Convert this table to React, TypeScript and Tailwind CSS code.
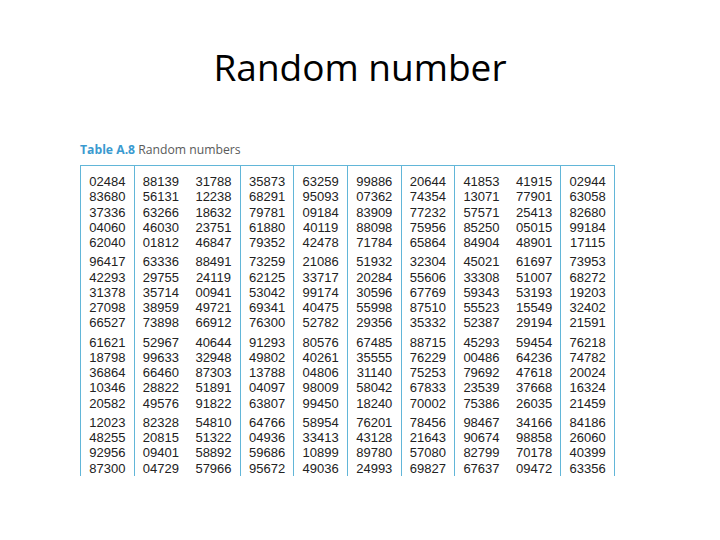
const COLUMNS: string[][] = [
  ["02484", "83680", "37336", "04060", "62040", "96417", "42293", "31378", "27098", "66527", "61621", "18798", "36864", "10346", "20582", "12023", "48255", "92956", "87300"],
  ["88139", "56131", "63266", "46030", "01812", "63336", "29755", "35714", "38959", "73898", "52967", "99633", "66460", "28822", "49576", "82328", "20815", "09401", "04729"],
  ["31788", "12238", "18632", "23751", "46847", "88491", "24119", "00941", "49721", "66912", "40644", "32948", "87303", "51891", "91822", "54810", "51322", "58892", "57966"],
  ["35873", "68291", "79781", "61880", "79352", "73259", "62125", "53042", "69341", "76300", "91293", "49802", "13788", "04097", "63807", "64766", "04936", "59686", "95672"],
  ["63259", "95093", "09184", "40119", "42478", "21086", "33717", "99174", "40475", "52782", "80576", "40261", "04806", "98009", "99450", "58954", "33413", "10899", "49036"],
  ["99886", "07362", "83909", "88098", "71784", "51932", "20284", "30596", "55998", "29356", "67485", "35555", "31140", "58042", "18240", "76201", "43128", "89780", "24993"],
  ["20644", "74354", "77232", "75956", "65864", "32304", "55606", "67769", "87510", "35332", "88715", "76229", "75253", "67833", "70002", "78456", "21643", "57080", "69827"],
  ["41853", "13071", "57571", "85250", "84904", "45021", "33308", "59343", "55523", "52387", "45293", "00486", "79692", "23539", "75386", "98467", "90674", "82799", "67637"],
  ["41915", "77901", "25413", "05015", "48901", "61697", "51007", "53193", "15549", "29194", "59454", "64236", "47618", "37668", "26035", "34166", "98858", "70178", "09472"],
  ["02944", "63058", "82680", "99184", "17115", "73953", "68272", "19203", "32402", "21591", "76218", "74782", "20024", "16324", "21459", "84186", "26060", "40399", "63356"],
];

// ruled groups of columns, as in the printed table
const GROUPS = [[0], [1, 2], [3], [4], [5], [6], [7, 8], [9]];

function chunk(list: string[]) {
  const out: string[][] = [];
  for (let i = 0; i < list.length; i += 5) out.push(list.slice(i, i + 5));
  return out;
}

function Column({ values }: { values: string[] }) {
  return (
    <div className="flex w-[52.6px] flex-col gap-[3.8px] text-center">
      {chunk(values).map((block, i) => (
        <div key={i} className="flex flex-col">
          {block.map((v) => (
            <span key={v} className="h-[15.3px] leading-[15.3px]">
              {v}
            </span>
          ))}
        </div>
      ))}
    </div>
  );
}

export default function App() {
  return (
    <div className="h-[540px] w-[720px] overflow-hidden bg-white">
      <h1 className="pt-[47px] text-center font-['Open_Sans',sans-serif] text-[37px] leading-[40px] text-black">
        Random number
      </h1>

      <div className="ml-[80px] mt-[57px] w-[535px]">
        <p className="font-['Open_Sans',sans-serif] text-[12.2px] leading-[12px] text-[#5a5a5a]">
          <span className="font-bold text-[#3a9ad0]">Table A.8</span> Random numbers
        </p>

        <div className="mt-[9px] flex border-t border-r border-[#62b6d8] font-['Liberation_Sans',sans-serif] text-[13px] text-[#222]">
          {GROUPS.map((group, g) => (
            <div key={g} className="flex border-l border-[#62b6d8] pt-[8px]">
              {group.map((c) => (
                <Column key={c} values={COLUMNS[c]} />
              ))}
            </div>
          ))}
        </div>
      </div>
    </div>
  );
}
